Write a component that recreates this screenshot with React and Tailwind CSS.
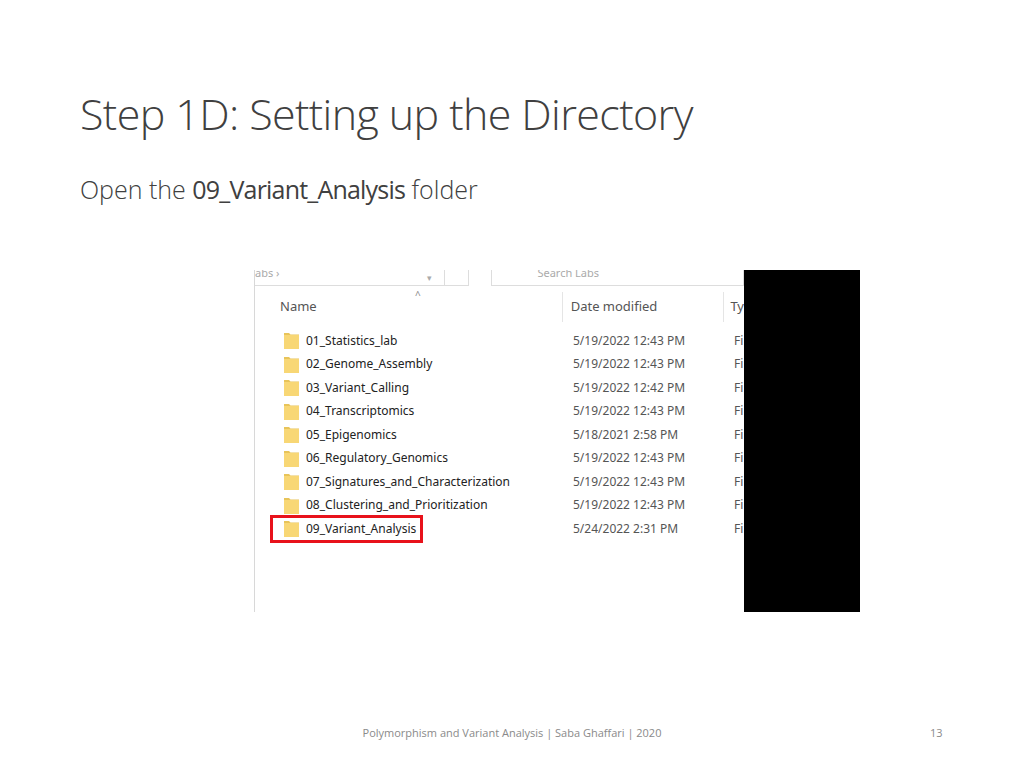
import React from "react";

const rows = [
  ["01_Statistics_lab", "5/19/2022 12:43 PM"],
  ["02_Genome_Assembly", "5/19/2022 12:43 PM"],
  ["03_Variant_Calling", "5/19/2022 12:42 PM"],
  ["04_Transcriptomics", "5/19/2022 12:43 PM"],
  ["05_Epigenomics", "5/18/2021 2:58 PM"],
  ["06_Regulatory_Genomics", "5/19/2022 12:43 PM"],
  ["07_Signatures_and_Characterization", "5/19/2022 12:43 PM"],
  ["08_Clustering_and_Prioritization", "5/19/2022 12:43 PM"],
  ["09_Variant_Analysis", "5/24/2022 2:31 PM"],
];

function Folder() {
  return (
    <svg width="15" height="17" viewBox="0 0 15 17" className="shrink-0">
      <path d="M0 1h5l1.5 1.5H15V17H0z" fill="#e8c45a" />
      <rect x="0" y="3" width="15" height="14" fill="#f8d775" />
    </svg>
  );
}

export default function App() {
  return (
    <div className="w-[1024px] h-[768px] bg-white relative overflow-hidden text-[#404040]" style={{ fontFamily: '"Open Sans", "Liberation Sans", sans-serif' }}>
      <div className="pl-[80px] pt-[84px]">
        <h1 className="text-[43px] leading-[60px] font-light tracking-[-0.6px]">Step 1D: Setting up the Directory</h1>
        <p className="mt-[28px] text-[25px] leading-[34px] font-light">
          Open the <span className="font-normal tracking-[-0.8px]">09_Variant_Analysis</span> folder
        </p>
      </div>

      <div className="absolute left-[254px] top-[270px] w-[606px] h-[342px] flex bg-white overflow-hidden" style={{ fontFamily: '"Noto Sans", "Liberation Sans", sans-serif' }}>
        <div className="w-[490px] relative border-l border-[#d8d8d8]">
          <div className="h-[16px] flex text-[#aaa] relative overflow-hidden">
            <div className="w-[195px] h-[16px] border-b border-r border-[#ddd] flex text-[11px] leading-[6px]"><span>abs ›</span><span className="ml-auto mr-3 text-[9px] leading-[16px]">▾</span></div>
            <div className="w-[25px] h-[16px] border-b border-r border-[#ddd]"></div>
            <div className="ml-[22px] w-[258px] h-[16px] border-b border-x border-[#ddd] pl-[45px] leading-[6px] text-[11px]">Search Labs</div>
          </div>
          <div className="absolute left-[160px] top-[18px] text-[10px] text-[#888]">^</div>
          <div className="h-[42px] flex items-center text-[13px] text-[#555] relative">
            <span className="ml-[25px] w-[284px]">Name</span>
            <span className="h-[30px] border-l border-[#e5e5e5]"></span>
            <span className="ml-[8px] w-[154px]">Date modified</span>
            <span className="h-[30px] border-l border-[#e5e5e5]"></span>
            <span className="ml-[6px]">Ty</span>
          </div>
          <div className="flex flex-col text-[12px] text-[#222] pt-[1px]">
            {rows.map(([n, d], i) => (
              <div key={n} className="h-[23.5px] flex items-center">
                <div className="ml-[18px] w-[291px] flex items-center">
                  <div className={"flex items-center gap-[7px] pl-[11px] " + (i === 8 ? "outline-[3px] outline outline-[#e8121b] pr-[4px] h-[22px]" : "")}>
                    <Folder />
                    <span>{n}</span>
                  </div>
                </div>
                <span className="ml-[9px] w-[161px] text-[#555]">{d}</span>
                <span className="text-[#555]">Fi</span>
              </div>
            ))}
          </div>
        </div>
        <div className="w-[116px] bg-black"></div>
      </div>

      <div className="absolute left-0 right-0 top-[725px] text-center text-[11px] text-[#8a8a8a]">Polymorphism and Variant Analysis | Saba Ghaffari | 2020</div>
      <div className="absolute left-[930px] top-[725px] text-[11px] text-[#8a8a8a]">13</div>
    </div>
  );
}
